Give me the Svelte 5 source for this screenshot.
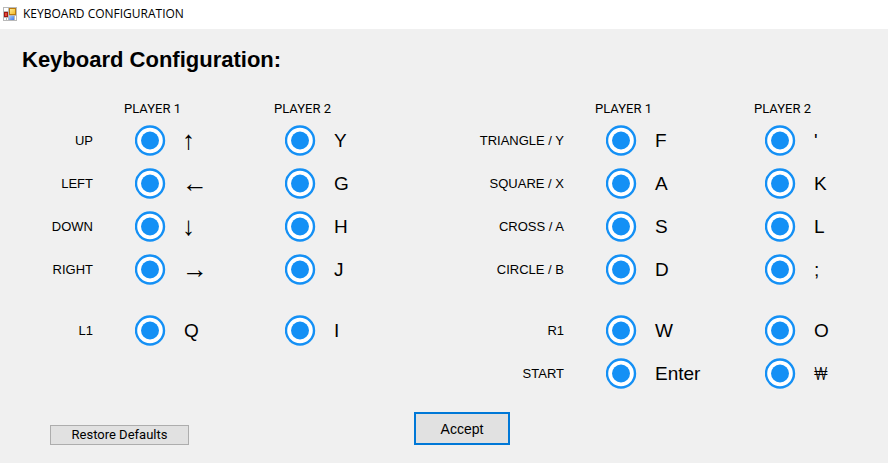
<script>
  const panels = [
    {
      name: 'directions',
      rows: [
        { label: 'UP', keys: ['↑', 'Y'] },
        { label: 'LEFT', keys: ['←', 'G'] },
        { label: 'DOWN', keys: ['↓', 'H'] },
        { label: 'RIGHT', keys: ['→', 'J'] },
        { label: 'L1', keys: ['Q', 'I'], spaced: true }
      ]
    },
    {
      name: 'actions',
      rows: [
        { label: 'TRIANGLE / Y', keys: ['F', "'"] },
        { label: 'SQUARE / X', keys: ['A', 'K'] },
        { label: 'CROSS / A', keys: ['S', 'L'] },
        { label: 'CIRCLE / B', keys: ['D', ';'] },
        { label: 'R1', keys: ['W', 'O'], spaced: true },
        { label: 'START', keys: ['Enter', '₩'] }
      ]
    }
  ];
</script>

<div class="window">
  <header class="titlebar">
    <svg class="app-icon" width="14" height="14" viewBox="0 0 14 14" aria-hidden="true">
      <defs>
        <linearGradient id="gold" x1="0" y1="0" x2="1" y2="1">
          <stop offset="0" stop-color="#fff0a0" />
          <stop offset="1" stop-color="#f2b41c" />
        </linearGradient>
        <linearGradient id="azure" x1="0" y1="0" x2="1" y2="1">
          <stop offset="0" stop-color="#a9ccff" />
          <stop offset="1" stop-color="#3f7be8" />
        </linearGradient>
      </defs>
      <rect width="14" height="14" fill="#b9b9b9" />
      <rect x="1" y="1" width="4" height="3" fill="#fff" />
      <rect x="1" y="11" width="2" height="2" fill="#fff" />
      <rect x="4" y="11" width="1" height="2" fill="#fff" />
      <rect x="12" y="9" width="1" height="4" fill="#fff" />
      <rect x="6.5" y="1.5" width="6" height="6" fill="url(#gold)" stroke="#b87a10" />
      <rect x="1.5" y="5.5" width="3" height="4" fill="#e0493a" stroke="#a31610" />
      <rect x="6" y="9" width="5" height="4" fill="url(#azure)" />
    </svg>
    <span>KEYBOARD CONFIGURATION</span>
  </header>

  <main>
    <h1>Keyboard Configuration:</h1>

    <div class="panels">
      {#each panels as panel}
        <table class={panel.name}>
          <thead>
            <tr>
              <td></td>
              <th scope="col">PLAYER 1</th>
              <th scope="col">PLAYER 2</th>
            </tr>
          </thead>
          <tbody>
            {#each panel.rows as row}
              <tr class:spaced={row.spaced}>
                <th scope="row">{row.label}</th>
                {#each row.keys as key, i}
                  <td>
                    <button class="bind" type="button" aria-label={`Set ${row.label} for player ${i + 1}`}>
                      <svg width="31" height="31" viewBox="0 0 31 31" aria-hidden="true">
                        <circle cx="15" cy="15.5" r="14" fill="#fff" stroke="#1490f5" stroke-width="2.4" />
                        <circle cx="15" cy="15.5" r="9" fill="#1490f5" />
                      </svg>
                    </button>
                    <span class="key" class:arrow={'↑←↓→'.includes(key)} class:won={key === '₩'}>{key}</span>
                  </td>
                {/each}
              </tr>
            {/each}
          </tbody>
        </table>
      {/each}
    </div>

    <footer>
      <button class="restore" type="button">Restore Defaults</button>
      <button class="accept" type="button">Accept</button>
    </footer>
  </main>
</div>

<style>
  :global(body) {
    margin: 0;
    background: #f0f0f0;
  }

  .window {
    min-height: 100vh;
    background: #f0f0f0;
    color: #000;
    font-family: 'Liberation Sans', Arial, sans-serif;
    font-size: 13px;
  }

  .titlebar {
    display: flex;
    align-items: center;
    gap: 6px;
    height: 29px;
    padding: 0 3px 2px;
    box-sizing: border-box;
    background: #fff;
    font-family: 'Open Sans', 'Noto Sans', sans-serif;
    font-size: 12px;
    line-height: 16px;
  }

  .app-icon {
    display: block;
  }

  h1 {
    margin: 0;
    padding: 17px 22px 0;
    font-size: 22px;
    line-height: 28px;
  }

  .panels {
    display: grid;
    grid-template-columns: 471fr 417fr;
    align-items: start;
    padding-top: 27px;
  }

  table,
  thead,
  tbody {
    display: block;
  }

  tr {
    display: grid;
    align-items: center;
  }

  .directions tr {
    grid-template-columns: 135fr 150fr 186fr;
  }

  .actions tr {
    grid-template-columns: 135fr 159fr 123fr;
  }

  th,
  td {
    padding: 0;
    font-weight: normal;
    text-align: left;
    white-space: nowrap;
  }

  thead tr {
    height: 18px;
    align-items: start;
  }

  thead th {
    margin-left: -11px;
    font-family: Roboto, sans-serif;
    font-size: 13px;
    line-height: 16px;
  }

  tbody tr {
    height: 43px;
  }

  tbody .spaced {
    margin-top: 18px;
  }

  tbody th {
    padding: 0 42px 0 0;
    text-align: right;
  }

  tbody td {
    display: flex;
    align-items: center;
    gap: 18px;
  }

  button {
    margin: 0;
    padding: 0;
    color: inherit;
    font-family: inherit;
  }

  .bind {
    display: block;
    flex: none;
    border: 0;
    border-radius: 50%;
    background: none;
    cursor: pointer;
  }

  .bind svg {
    display: block;
  }

  .key {
    font-size: 19px;
    line-height: 24px;
  }

  .arrow {
    margin-left: -2px;
    font-family: 'Liberation Serif', serif;
    font-size: 26px;
  }

  .won {
    font-family: Roboto, sans-serif;
    font-size: 18px;
    font-weight: 300;
  }

  footer {
    display: grid;
    grid-template-columns: 364fr 474fr;
    align-items: end;
    justify-items: start;
    padding: 17px 0 18px 50px;
  }

  .restore {
    width: 139px;
    height: 20px;
    border: 1px solid #adadad;
    background: #e1e1e1;
    font-family: Roboto, sans-serif;
    font-size: 13px;
    line-height: 18px;
  }

  .accept {
    width: 96px;
    height: 33px;
    border: 2px solid #0078d7;
    background: #e1e1e1;
    font-size: 14px;
    line-height: 28px;
  }
</style>
